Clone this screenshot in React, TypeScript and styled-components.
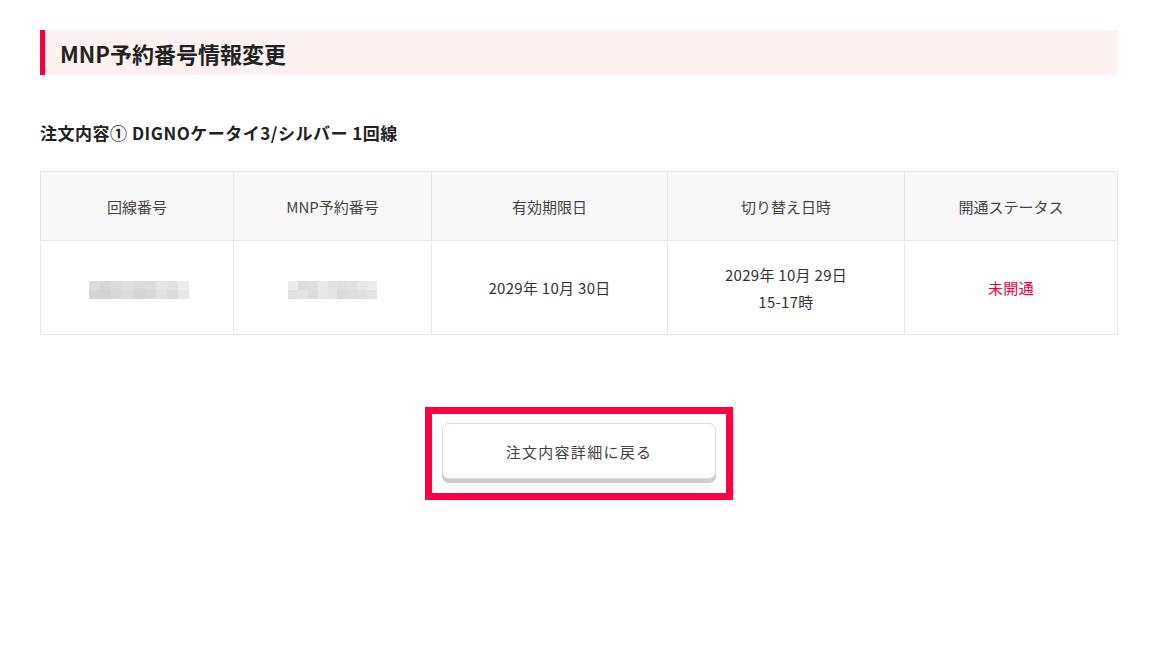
import React from "react";
import styled, { createGlobalStyle } from "styled-components";

const Global = createGlobalStyle`
  html, body { margin: 0; padding: 0; background: #fff; }
  body { font-family: "Noto Sans CJK JP", "Noto Sans", sans-serif; color: #333; }
`;

const Page = styled.div`
  width: 1078px;
  margin-left: 40px;
  padding-top: 30px;
`;

const Heading = styled.h1`
  margin: 0;
  height: 45px;
  display: flex;
  align-items: center;
  background: #fdf2f2;
  border-left: 5px solid #f6003c;
  padding-left: 15px;
  font-size: 22px;
  font-weight: 700;
  color: #222;
`;

const SubTitle = styled.h2`
  margin: 47px 0 0;
  font-size: 17px;
  line-height: 22px;
  letter-spacing: 0.03em;
  font-weight: 700;
  color: #222;
`;

const Table = styled.table`
  margin-top: 27px;
  width: 1078px;
  border-collapse: collapse;
  table-layout: fixed;
  border: 1px solid #e6e6e6;
`;

const Th = styled.th<{ $w?: number }>`
  width: ${(p) => (p.$w ? `${p.$w}px` : "auto")};
  height: 68px;
  background: #f8f8f8;
  border: 1px solid #e6e6e6;
  font-size: 15px;
  font-weight: 400;
  color: #444;
  text-align: center;
  padding: 0;
`;

const Td = styled.td<{ $red?: boolean }>`
  height: 93px;
  border: 1px solid #e6e6e6;
  font-size: 15px;
  line-height: 27px;
  letter-spacing: 0.02em;
  color: ${(p) => (p.$red ? "#f6003c" : "#333")};
  text-align: center;
  vertical-align: middle;
  padding: 0;
`;

const Mosaic = styled.div<{ $w: number; $shift?: number }>`
  display: inline-grid;
  grid-template-columns: repeat(9, 1fr);
  grid-template-rows: 9px 9px;
  width: ${(p) => p.$w}px;
  vertical-align: middle;
  margin-top: 1px;
  margin-left: ${(p) => p.$shift ?? 0}px;
`;

const Tile = styled.span<{ $c: string }>`
  background: ${(p) => p.$c};
`;

const ButtonArea = styled.div`
  display: flex;
  justify-content: center;
  margin-top: 72px;
`;

const Highlight = styled.div`
  border: 7px solid #ff0040;
  padding: 9px 10px 10px 10px;
`;

const BackButton = styled.button`
  width: 274px;
  height: 56px;
  background: #fff;
  border: 1px solid #dcdcdc;
  border-radius: 7px;
  box-shadow: 0 4px 0 #cdcdcd;
  font-family: "Noto Sans CJK JP", "Noto Sans", sans-serif;
  font-size: 15px;
  color: #444;
  letter-spacing: 1.3px;
  cursor: pointer;
  margin-bottom: 4px;
`;

const mosaic1 = [
  "#dcdcde", "#d7d7d9", "#dadada", "#e0dedc", "#d9dadc", "#dcdcdf", "#e6e6e8", "#e2e2e4", "#ededef",
  "#d6d5d6", "#d3d3d6", "#d8d8d8", "#dddbd8", "#d5d5d9", "#d8d8db", "#e1e1e3", "#dcdcdf", "#e6e7e9",
];
const mosaic2 = [
  "#ebebeb", "#dcdce0", "#dedede", "#eaeaea", "#e2e2e4", "#dedee1", "#e1e1e4", "#e8e8ea", "#ececee",
  "#e3e0e2", "#e2e2e4", "#dcdcdf", "#e7e7e5", "#e3e3e5", "#dadadd", "#dfdfe2", "#e0e0e3", "#e2e2e4",
];

export default function App() {
  return (
    <>
      <Global />
      <Page>
        <Heading>MNP予約番号情報変更</Heading>
        <SubTitle>注文内容① DIGNOケータイ3/シルバー 1回線</SubTitle>
        <Table>
          <thead>
            <tr>
              <Th $w={192}>回線番号</Th>
              <Th $w={197}>MNP予約番号</Th>
              <Th $w={235}>有効期限日</Th>
              <Th $w={236}>切り替え日時</Th>
              <Th>開通ステータス</Th>
            </tr>
          </thead>
          <tbody>
            <tr>
              <Td>
                <Mosaic $w={100} $shift={4}>
                  {mosaic1.map((c, i) => (
                    <Tile key={i} $c={c} />
                  ))}
                </Mosaic>
              </Td>
              <Td>
                <Mosaic $w={89}>
                  {mosaic2.map((c, i) => (
                    <Tile key={i} $c={c} />
                  ))}
                </Mosaic>
              </Td>
              <Td>2029年 10月 30日</Td>
              <Td>
                2029年 10月 29日
                <br />
                15-17時
              </Td>
              <Td $red>未開通</Td>
            </tr>
          </tbody>
        </Table>
        <ButtonArea>
          <Highlight>
            <BackButton>注文内容詳細に戻る</BackButton>
          </Highlight>
        </ButtonArea>
      </Page>
    </>
  );
}
